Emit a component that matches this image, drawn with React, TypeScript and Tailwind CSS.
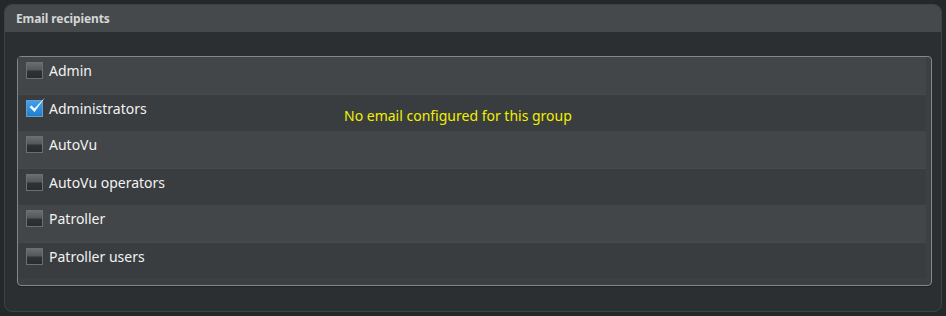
const groups = [
  { name: 'Admin', checked: false },
  { name: 'Administrators', checked: true, note: 'No email configured for this group' },
  { name: 'AutoVu', checked: false },
  { name: 'AutoVu operators', checked: false },
  { name: 'Patroller', checked: false },
  { name: 'Patroller users', checked: false },
];

const CheckBox = ({ checked }: { checked: boolean }) => {
  if (checked) {
    return (
      <div className="relative w-[17px] h-[17px] shrink-0 border border-[#6f9cc4] bg-gradient-to-b from-[#3ea0ee] to-[#1f7fcf]">
        <svg className="absolute -top-[5px] left-[1px] w-[18px] h-[19px]" viewBox="0 0 18 19">
          <path d="M1.5 11 L6.5 16 L17 1.5 L6.5 12.5 L3.5 9.5 Z" fill="#ffffff" />
        </svg>
      </div>
    );
  }
  return (
    <div className="w-[17px] h-[17px] shrink-0 border border-[#6c6f72] bg-[linear-gradient(to_bottom,#6a6d70_0%,#55585b_45%,#2f3133_55%,#2a2c2e_100%)]" />
  );
};

const App = () => {
  return (
    <div className="w-[946px] h-[316px] bg-[#25282a] p-[4px] font-['Segoe_UI','Noto_Sans',sans-serif]">
      <div className="w-[938px] h-[308px] rounded-[8px] border border-[#3e4244] bg-[#2c2f31] overflow-hidden flex flex-col">
        {/* Header */}
        <div className="h-[27px] shrink-0 bg-[#45494b] px-[11px] flex items-center">
          <span className="text-[12px] font-bold text-[#d4d6d7] tracking-[-0.1px]">Email recipients</span>
        </div>

        {/* Body */}
        <div className="flex-1 pt-[24px] pl-[12px] pr-[9px] pb-[25px]">
          <div className="h-full rounded-[4px] border border-[#85888b] bg-[#3d4042] pr-[5px] shadow-[0_1px_0_#1f2123]">
            {groups.map((g, i) => (
              <div
                key={g.name}
                className={
                  'h-[37px] flex items-start pt-[5px] pl-[8px] ' +
                  (i % 2 === 0 ? 'bg-[#434648]' : 'bg-[#3a3d3f] border-t border-[#47494b]')
                }
              >
                <CheckBox checked={g.checked} />
                <span className="ml-[6px] w-[295px] shrink-0 text-[14px] leading-[17px] text-[#f2f2f2]">{g.name}</span>
                {g.note && (
                  <span className="mt-[7px] text-[14px] leading-[17px] text-[#f0f000]">{g.note}</span>
                )}
              </div>
            ))}
          </div>
        </div>
      </div>
    </div>
  );
};

export default App;
